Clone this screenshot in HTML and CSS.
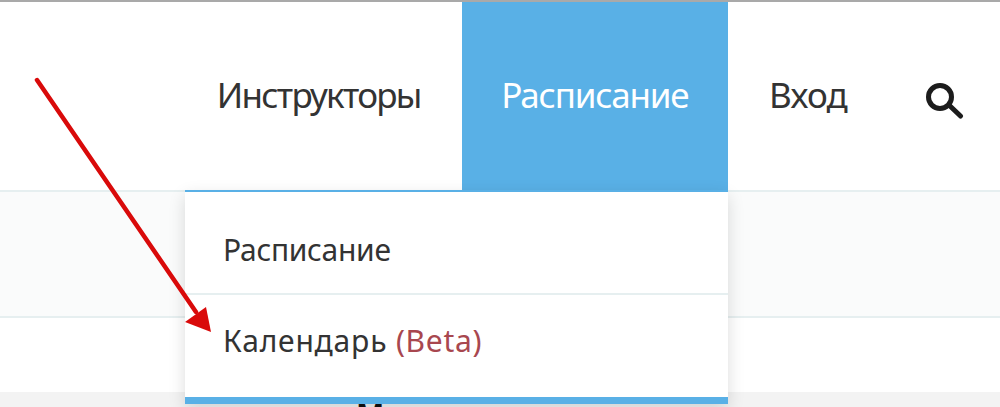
FILE: index.html
```html
<!DOCTYPE html>
<html lang="ru">
<head>
    <meta charset="UTF-8">
    <meta name="viewport" content="width=device-width, initial-scale=1.0">
    <title>Расписание</title>
    <link rel="stylesheet" href="styles.css">
</head>
<body>
    <!-- Navbar -->
    <nav class="navbar">
        <ul class="menu">
            <li class="menu-item"><a href="#">Инструкторы</a></li>
            <li class="menu-item active">
                <a href="#">Расписание</a>
                <ul class="dropdown">
                    <li class="dropdown-item"><a href="#">Расписание</a></li>
                    <li class="dropdown-item calendar"><a href="#">Календарь <span class="beta">(Beta)</span></a></li>
                </ul>
            </li>
            <li class="menu-item login"><a href="#">Вход</a></li>
        </ul>
        <a class="search" href="#" aria-label="Поиск">
            <svg width="38" height="38" viewBox="0 0 38 38" fill="none" stroke="#1c1c1c" stroke-linecap="round">
                <circle cx="14" cy="14" r="11.5" stroke-width="5"/>
                <path d="M24 23 L34.5 33" stroke-width="5"/>
            </svg>
        </a>
    </nav>

    <!-- Page bands under the navbar -->
    <div class="band"></div>
    <div class="blank"></div>
    <div class="section">
        <h2 class="section-title">М</h2>
    </div>

    <!-- Red annotation arrow -->
    <svg class="arrow" width="220" height="340" viewBox="0 0 220 340">
        <path d="M37 80 L196 312" stroke="#d90a0a" stroke-width="4.5" stroke-linecap="round"/>
        <path d="M185 322 L206 307 L211 332 Z" fill="#d90a0a"/>
    </svg>
</body>
</html>
```

FILE: styles.css
```css
/* Reset & Global Styling */
* {
    margin: 0;
    padding: 0;
    box-sizing: border-box;
}
html, body {
    height: 407px;
    overflow: hidden;
}
body {
    font-family: "Noto Sans", "Open Sans", sans-serif;
    background-color: #fff;
    color: #333;
    border-top: 2px solid #a9a9a9;
}
a {
    text-decoration: none;
    color: inherit;
}
ul {
    list-style: none;
}

/* Navbar */
.navbar {
    height: 188px;
    display: flex;
    justify-content: flex-end;
    align-items: stretch;
    padding-right: 36px;
    background-color: #fff;
}
.menu {
    display: flex;
}
.menu-item {
    position: relative;
    display: flex;
    align-items: center;
    padding: 0 41px 4px;
    font-size: 35px;
    letter-spacing: -1.7px;
    color: #333;
}
.menu-item.active {
    background-color: #59b0e6;
    color: #fff;
    padding: 0 39.5px 4px;
    letter-spacing: -1.2px;
}
.menu-item.login {
    letter-spacing: -0.8px;
}
.search {
    display: flex;
    align-items: center;
    margin-left: 38px;
    padding-top: 12px;
}

/* Dropdown */
.dropdown {
    position: absolute;
    top: 188px;
    right: 0;
    width: 543px;
    z-index: 2;
    background-color: #fff;
    border-top: 2px solid #59b0e6;
    border-bottom: 7px solid #59b0e6;
    box-shadow: 0 6px 16px rgba(0, 0, 0, 0.14);
    font-size: 30px;
    letter-spacing: -0.3px;
    color: #333;
}
.dropdown-item {
    height: 101px;
    display: flex;
    align-items: center;
    padding-left: 38px;
    padding-top: 14px;
}
.dropdown-item.calendar {
    height: 104px;
    border-top: 2px solid #e6eff0;
    padding-top: 0;
    padding-bottom: 11px;
    letter-spacing: 0.8px;
}
.beta {
    color: #a8474f;
    letter-spacing: 0.7px;
}

/* Page bands */
.band {
    height: 128px;
    background-color: #fafbfb;
    border-top: 2px solid #e6eff0;
    border-bottom: 2px solid #e6eff0;
}
.blank {
    height: 74px;
    background-color: #fff;
}
.section {
    height: 15px;
    overflow: hidden;
    background-color: #f3f3f3;
    padding: 8px 0 0 356px;
}
.section-title {
    font-size: 30px;
    line-height: 1;
    color: #111;
}

/* Annotation */
.arrow {
    position: absolute;
    top: 0;
    left: 0;
    z-index: 3;
}
```
